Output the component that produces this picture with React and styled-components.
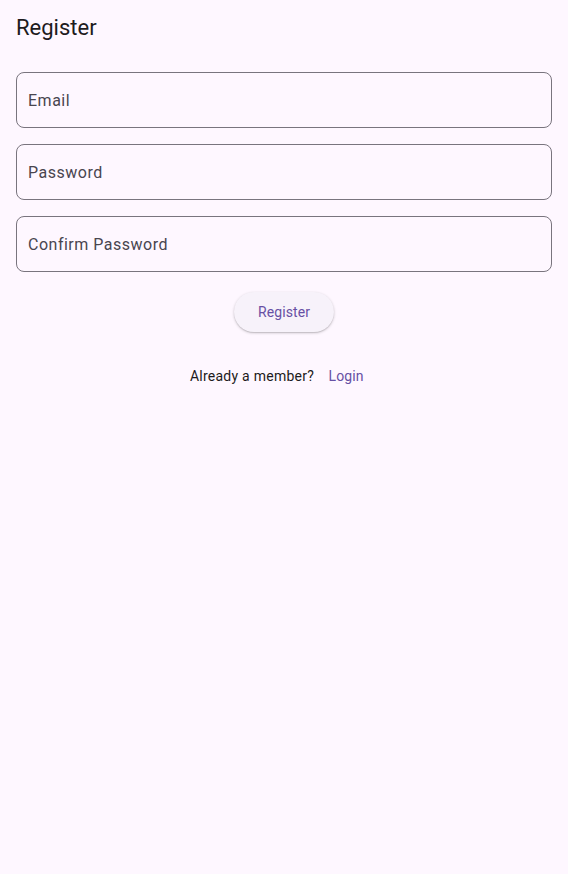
import React from "react";
import styled, { createGlobalStyle } from "styled-components";

const Global = createGlobalStyle`
  html, body { margin: 0; padding: 0; background: #fef7ff; }
  body { font-family: Roboto, "Noto Sans", sans-serif; -webkit-font-smoothing: antialiased; }
  * { box-sizing: border-box; }
`;

const Page = styled.div`
  min-height: 874px;
  background: #fef7ff;
  display: flex;
  flex-direction: column;
`;

const AppBar = styled.header`
  height: 56px;
  display: flex;
  align-items: center;
  padding: 0 16px;
`;

const Title = styled.h1`
  margin: 0;
  font-size: 22px;
  font-weight: 400;
  color: #1d1b20;
  line-height: 28px;
`;

const Body = styled.main`
  padding: 16px;
  display: flex;
  flex-direction: column;
  gap: 16px;
`;

const Field = styled.label`
  height: 56px;
  border: 1px solid #79747e;
  border-radius: 8px;
  display: flex;
  align-items: center;
  padding: 0 11px;
`;

const Input = styled.input`
  border: none;
  outline: none;
  background: transparent;
  width: 100%;
  font-family: Roboto, sans-serif;
  font-size: 16px;
  letter-spacing: 0.5px;
  color: #1d1b20;
  padding: 0;
  &::placeholder { color: #49454f; }
`;

const ButtonRow = styled.div`
  display: flex;
  justify-content: center;
  padding-top: 4px;
`;

const ElevatedButton = styled.button`
  height: 40px;
  padding: 0 24px;
  border: none;
  border-radius: 20px;
  background: #f7f2fa;
  color: #6750a4;
  font-family: Roboto, sans-serif;
  font-size: 14px;
  font-weight: 400;
  letter-spacing: 0.1px;
  box-shadow: 0 1px 3px 0 rgba(0,0,0,0.2), 0 1px 1px 0 rgba(0,0,0,0.1);
  cursor: pointer;
`;

const LinkRow = styled.div`
  display: flex;
  justify-content: center;
  align-items: center;
  margin-top: 8px;
`;

const Prompt = styled.span`
  font-size: 14px;
  letter-spacing: 0.25px;
  color: #1d1b20;
`;

const TextButton = styled.button`
  height: 40px;
  min-width: 64px;
  padding: 0 12px;
  border: none;
  background: transparent;
  border-radius: 20px;
  color: #6750a4;
  font-family: Roboto, sans-serif;
  font-size: 14px;
  font-weight: 400;
  letter-spacing: 0.1px;
  cursor: pointer;
`;

export default function App() {
  return (
    <Page>
      <Global />
      <AppBar>
        <Title>Register</Title>
      </AppBar>
      <Body>
        <Field><Input placeholder="Email" /></Field>
        <Field><Input placeholder="Password" type="password" /></Field>
        <Field><Input placeholder="Confirm Password" type="password" /></Field>
        <ButtonRow>
          <ElevatedButton>Register</ElevatedButton>
        </ButtonRow>
        <LinkRow>
          <Prompt>Already a member?</Prompt>
          <TextButton>Login</TextButton>
        </LinkRow>
      </Body>
    </Page>
  );
}
